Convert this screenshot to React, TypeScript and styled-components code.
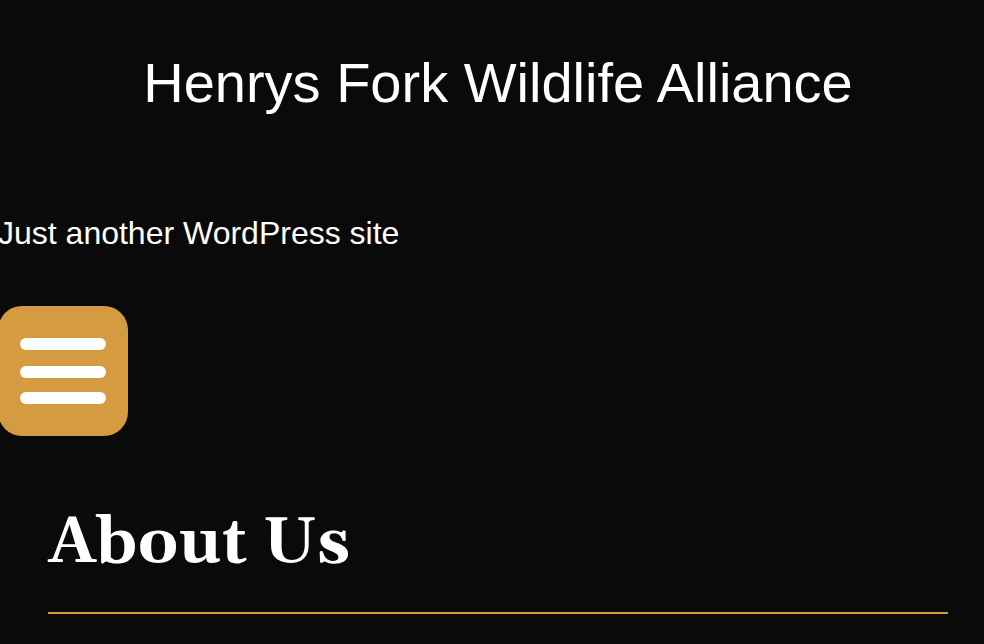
import React from "react";
import styled, { createGlobalStyle } from "styled-components";

const GlobalStyle = createGlobalStyle`
  * {
    box-sizing: border-box;
  }
  body {
    margin: 0;
    background: #0a0a0a;
    color: #ffffff;
    font-family: "Liberation Sans", Arial, sans-serif;
    overflow-x: hidden;
  }
`;

const SiteHeader = styled.header`
  margin-left: -2px;
`;

const SiteTitle = styled.h1`
  margin: 0;
  padding: 49px 0 0 14px;
  font-size: 56px;
  line-height: 68px;
  font-weight: 400;
  text-align: center;
`;

const Tagline = styled.p`
  margin: 96px 0 0;
  font-size: 32px;
  line-height: 40px;
`;

const MenuButton = styled.button`
  display: flex;
  flex-direction: column;
  align-items: center;
  justify-content: center;
  gap: 14px;
  width: 130px;
  height: 130px;
  margin: 53px 0 0;
  padding: 0;
  border: 0;
  border-radius: 24px;
  background: #d59b41;
  cursor: pointer;
`;

const MenuBar = styled.span`
  width: 86px;
  height: 12px;
  border-radius: 6px;
  background: #ffffff;

  &:first-child {
    margin-bottom: 2px;
  }
`;

const Main = styled.main`
  padding: 72px 36px 30px 48px;
`;

const PageTitle = styled.h2`
  margin: 0;
  padding-bottom: 32px;
  border-bottom: 2px solid #d59b41;
  font-family: Gelasio, Georgia, "Liberation Serif", serif;
  font-size: 64px;
  line-height: 72px;
  font-weight: 700;
`;

export default function App() {
  return (
    <>
      <GlobalStyle />
      <SiteHeader>
        <SiteTitle>Henrys Fork Wildlife Alliance</SiteTitle>
        <Tagline>Just another WordPress site</Tagline>
        <MenuButton type="button" aria-label="Menu">
          <MenuBar />
          <MenuBar />
          <MenuBar />
        </MenuButton>
      </SiteHeader>
      <Main>
        <PageTitle>About Us</PageTitle>
      </Main>
    </>
  );
}
